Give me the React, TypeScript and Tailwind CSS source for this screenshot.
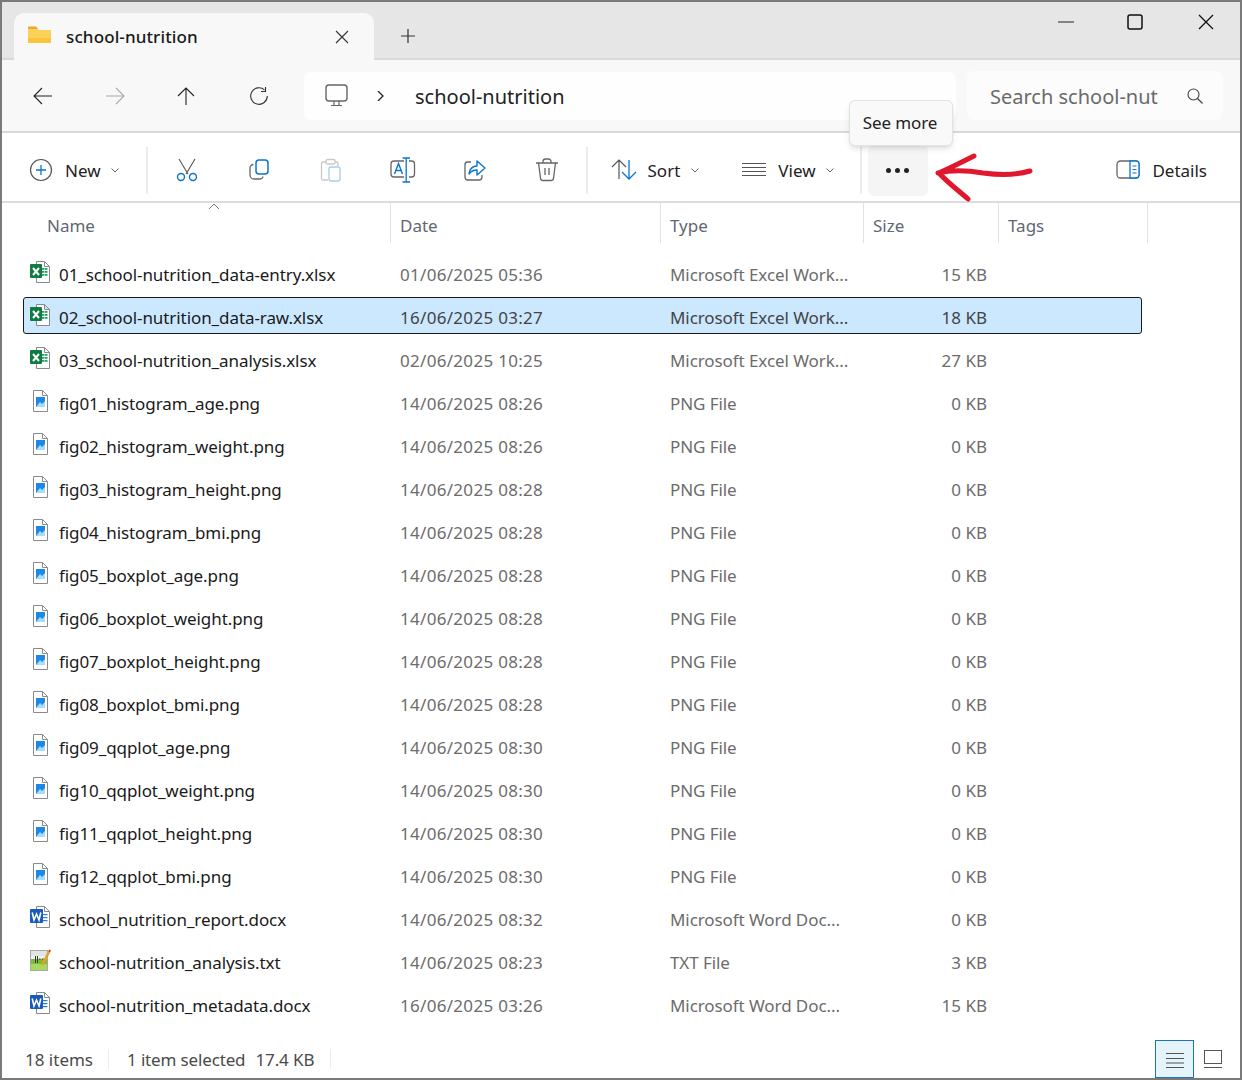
import type { ReactNode } from "react";

type Kind = "xlsx" | "png" | "docx" | "txt";

interface FileRow {
  name: string;
  date: string;
  type: string;
  size: string;
  kind: Kind;
  selected?: boolean;
}

const files: FileRow[] = [
  { name: "01_school-nutrition_data-entry.xlsx", date: "01/06/2025 05:36", type: "Microsoft Excel Work...", size: "15 KB", kind: "xlsx" },
  { name: "02_school-nutrition_data-raw.xlsx", date: "16/06/2025 03:27", type: "Microsoft Excel Work...", size: "18 KB", kind: "xlsx", selected: true },
  { name: "03_school-nutrition_analysis.xlsx", date: "02/06/2025 10:25", type: "Microsoft Excel Work...", size: "27 KB", kind: "xlsx" },
  { name: "fig01_histogram_age.png", date: "14/06/2025 08:26", type: "PNG File", size: "0 KB", kind: "png" },
  { name: "fig02_histogram_weight.png", date: "14/06/2025 08:26", type: "PNG File", size: "0 KB", kind: "png" },
  { name: "fig03_histogram_height.png", date: "14/06/2025 08:28", type: "PNG File", size: "0 KB", kind: "png" },
  { name: "fig04_histogram_bmi.png", date: "14/06/2025 08:28", type: "PNG File", size: "0 KB", kind: "png" },
  { name: "fig05_boxplot_age.png", date: "14/06/2025 08:28", type: "PNG File", size: "0 KB", kind: "png" },
  { name: "fig06_boxplot_weight.png", date: "14/06/2025 08:28", type: "PNG File", size: "0 KB", kind: "png" },
  { name: "fig07_boxplot_height.png", date: "14/06/2025 08:28", type: "PNG File", size: "0 KB", kind: "png" },
  { name: "fig08_boxplot_bmi.png", date: "14/06/2025 08:28", type: "PNG File", size: "0 KB", kind: "png" },
  { name: "fig09_qqplot_age.png", date: "14/06/2025 08:30", type: "PNG File", size: "0 KB", kind: "png" },
  { name: "fig10_qqplot_weight.png", date: "14/06/2025 08:30", type: "PNG File", size: "0 KB", kind: "png" },
  { name: "fig11_qqplot_height.png", date: "14/06/2025 08:30", type: "PNG File", size: "0 KB", kind: "png" },
  { name: "fig12_qqplot_bmi.png", date: "14/06/2025 08:30", type: "PNG File", size: "0 KB", kind: "png" },
  { name: "school_nutrition_report.docx", date: "14/06/2025 08:32", type: "Microsoft Word Doc...", size: "0 KB", kind: "docx" },
  { name: "school-nutrition_analysis.txt", date: "14/06/2025 08:23", type: "TXT File", size: "3 KB", kind: "txt" },
  { name: "school-nutrition_metadata.docx", date: "16/06/2025 03:26", type: "Microsoft Word Doc...", size: "15 KB", kind: "docx" },
];

const Ico = ({ size = 24, className, children }: { size?: number; className?: string; children: ReactNode }) => (
  <svg width={size} height={size} viewBox={`0 0 ${size} ${size}`} fill="none" className={className}>
    {children}
  </svg>
);

const Chevron = () => (
  <Ico size={10} className="shrink-0">
    <path d="M1.5 3.5 5 7l3.5-3.5" stroke="#666" strokeWidth="1" />
  </Ico>
);

const FileIcon = ({ kind }: { kind: Kind }) => {
  if (kind === "xlsx") {
    return (
      <Ico>
        <path d="M8.5 1.5h8l5 5v16h-13z M16.5 1.5v5h5" fill="#fff" stroke="#8a8a8a" />
        <rect x="14" y="8" width="2.5" height="1.8" fill="#21a366" />
        <rect x="17" y="8" width="2.5" height="1.8" fill="#21a366" />
        <rect x="14" y="11" width="2.5" height="1.8" fill="#21a366" />
        <rect x="17" y="11" width="2.5" height="1.8" fill="#21a366" />
        <rect x="14" y="14" width="2.5" height="1.8" fill="#21a366" />
        <rect x="17" y="14" width="2.5" height="1.8" fill="#21a366" />
        <rect x="2" y="4" width="12" height="14" rx="1" fill="#107c41" />
        <path d="m5 8 6 7m0-7-6 7" stroke="#fff" strokeWidth="2" />
      </Ico>
    );
  }
  if (kind === "docx") {
    return (
      <Ico>
        <path d="M8.5 1.5h8l5 5v16h-13z M16.5 1.5v5h5" fill="#fff" stroke="#8a8a8a" />
        <rect x="15" y="9" width="4.5" height="1.2" fill="#2b7cd3" />
        <rect x="15" y="12" width="4.5" height="1.2" fill="#2b7cd3" />
        <rect x="15" y="15" width="4.5" height="1.2" fill="#2b7cd3" />
        <rect x="2" y="4" width="13" height="14" rx="1" fill="#185abd" />
        <path d="m4.2 7.500 1.800 7.500 2.500-6 2.500 6 1.800-7.500" stroke="#fff" strokeWidth="1.600" />
      </Ico>
    );
  }
  if (kind === "txt") {
    return (
      <Ico>
        <rect x="2.5" y="2.5" width="17" height="20" fill="#f1f1f1" stroke="#a8a8a8" />
        <path d="M3 3h16v5H3z" fill="#dfe6e2" />
        <path d="M3 11h16v11H3z" fill="#7dbb3c" />
        <path d="M3 16h16v6H3z" fill="#a8d85c" />
        <path d="M7.5 8v7M9.5 8v7" stroke="#333" />
        <path d="M11 11h1.5M14 11h1.5" stroke="#333" />
        <path d="m14 17 7-13" stroke="#e8a21c" strokeWidth="2.6" />
        <path d="m21 4 1-2" stroke="#c0392b" strokeWidth="2" />
      </Ico>
    );
  }
  return (
    <Ico>
      <path d="M5.5 1.500h9l5 5v16h-14z M14.500 1.500v5h5" fill="#fff" stroke="#8a8a8a" />
      <rect x="8" y="8" width="9" height="10" fill="#1e88e5" />
      <path d="m8 18 4-5 2 2 3-3v6z" fill="#a7dcfb" />
    </Ico>
  );
};

const Row = ({ f }: { f: FileRow }) => {
  const muted = f.selected ? "text-[#444]" : "text-[#6c6c6c]";
  return (
    <div
      className={`grid grid-cols-[367px_270px_203px_123px] h-[37px] w-[1119px] ml-[21px] items-center rounded-[3px] border ${
        f.selected ? "bg-[#cce8ff] border-[#1a1a1a]" : "border-transparent"
      }`}
    >
      <div className="flex items-center pl-[4px] gap-[7px] pt-[3px] text-[#1a1a1a] tracking-[-0.08px]">
        <span className="-mt-[5px] flex"><FileIcon kind={f.kind} /></span>
        <span>{f.name}</span>
      </div>
      <div className={`pl-[9px] pt-[3px] tracking-[0.3px] ${muted}`}>{f.date}</div>
      <div className={`pl-[9px] pt-[3px] tracking-[-0.08px] ${muted}`}>{f.type}</div>
      <div className={`text-right pt-[3px] ${muted}`}>{f.size}</div>
    </div>
  );
};

const ToolIcon = ({ children }: { children: ReactNode }) => (
  <div className="w-[72px] h-[51px] flex items-center justify-center">{children}</div>
);

const Divider = () => <div className="w-[2px] h-[47px] bg-[#ececec]" />;

const HeaderCell = ({ label, width }: { label: string; width: string }) => (
  <div className={`${width} h-[40px] border-r border-[#e3e3e3] pl-[9px] pt-[4px] flex items-center text-[#5f6773]`}>
    {label}
  </div>
);

export default function App() {
  return (
    <div className="relative w-[1242px] h-[1080px] border-2 border-[#7a7a7a] bg-white flex flex-col overflow-hidden font-['Noto_Sans','Open_Sans',sans-serif] text-[17px] leading-none">
      {/* tab strip */}
      <div className="h-[58px] bg-[#e6e6e6] border-b-2 border-[#d8d8d8] flex items-end pl-[12px] shrink-0">
        <div className="w-[360px] h-[47px] -mb-[2px] bg-[#f8f8f8] rounded-t-[10px] flex items-center pl-[14px]">
          <Ico className="-mt-[2px]">
            <path d="M0 3.5a1 1 0 0 1 1-1h7l2.5 3H0z" fill="#f3a80f" />
            <path d="M0 6h23v13H0z" fill="#fcd15a" />
            <path d="M0 14h23v5H0z" fill="#f9c53a" />
          </Ico>
          <span className="ml-[14px] font-medium text-[#1a1a1a] tracking-[0.12px]">school-nutrition</span>
          <Ico size={14} className="ml-auto mr-[25px]">
            <path d="m1 1 12 12M13 1 1 13" stroke="#333" strokeWidth="1.1" />
          </Ico>
        </div>
        <div className="ml-[26px] mb-[14px]">
          <Ico size={16}>
            <path d="M8 1v14M1 8h14" stroke="#333" strokeWidth="1.2" />
          </Ico>
        </div>
        <div className="ml-auto flex self-start items-center h-[40px] pr-[26px]">
          <Ico size={16}><path d="M0 8h16" stroke="#222" strokeWidth="1" /></Ico>
          <Ico size={16} className="ml-[53px]"><rect x="1" y="1" width="14" height="14" rx="2" stroke="#111" strokeWidth="1.5" /></Ico>
          <Ico size={16} className="ml-[55px]"><path d="m1 1 14 14M15 1 1 15" stroke="#111" strokeWidth="1.3" /></Ico>
        </div>
      </div>

      {/* address row */}
      <div className="h-[73px] bg-[#f8f8f8] border-b-2 border-[#d8d8d8] flex items-center pl-[31px] shrink-0">
        <Ico size={20}><path d="M1 10h18M9 2l-8 8 8 8" stroke="#222" strokeWidth="1.1" /></Ico>
        <Ico size={20} className="ml-[52px]"><path d="M1 10h18M11 2l8 8-8 8" stroke="#aaa" strokeWidth="1.1" /></Ico>
        <Ico size={20} className="ml-[51px]"><path d="M10 19V2M2 10l8-8 8 8" stroke="#222" strokeWidth="1.1" /></Ico>
        <Ico size={20} className="ml-[53px]">
          <path d="M15.5 3.8A8.3 8.3 0 1 0 18.3 10" stroke="#333" strokeWidth="1.1" />
          <path d="M16.5 1v4.5H12" stroke="#333" strokeWidth="1.1" />
        </Ico>
        <div className="ml-[35px] w-[652px] h-[48px] bg-[#fefefe] rounded-[7px] flex items-center pl-[21px]">
          <Ico size={24}>
            <rect x="1" y="1" width="21" height="16" rx="3" stroke="#666" strokeWidth="1.4" />
            <path d="M9 17v4M14 17v4M6 21.5h11" stroke="#666" strokeWidth="1.2" />
          </Ico>
          <Ico size={10} className="ml-[27px]"><path d="m2 0 5 5-5 5" stroke="#222" strokeWidth="1.3" /></Ico>
          <span className="ml-[29px] pt-[2px] text-[20px] text-[#222]">school-nutrition</span>
        </div>
        <div className="ml-[11px] w-[256px] h-[49px] bg-[#fcfcfc] rounded-[7px] flex items-center pl-[23px] pr-[20px] text-[20px] text-[#6a6a6a]">
          <span className="pt-[2px]">Search school-nut</span>
          <Ico size={16} className="ml-auto">
            <circle cx="6.5" cy="6.5" r="5.5" stroke="#444" strokeWidth="1.1" />
            <path d="m10.5 10.5 5 5" stroke="#444" strokeWidth="1.2" />
          </Ico>
        </div>
      </div>

      {/* toolbar */}
      <div className="h-[70px] border-b-2 border-[#dcdcdc] flex items-center pl-[27px] pt-[6px] shrink-0 text-[#222]">
        <Ico>
          <circle cx="12" cy="12" r="10.5" stroke="#555" strokeWidth="1.2" />
          <path d="M12 7v10M7 12h10" stroke="#0a74d0" strokeWidth="1.3" />
        </Ico>
        <span className="ml-[12px]">New</span>
        <span className="ml-[9px]"><Chevron /></span>
        <span className="ml-[26px]"><Divider /></span>
        <span className="ml-[3px]" />
        <ToolIcon>
          <Ico>
            <path d="m4 1 9 15M20 1l-9 15" stroke="#555" strokeWidth="1.1" />
            <circle cx="6" cy="19" r="3.5" stroke="#0a74d0" strokeWidth="1.4" />
            <circle cx="18" cy="19" r="3.5" stroke="#0a74d0" strokeWidth="1.4" />
          </Ico>
        </ToolIcon>
        <ToolIcon>
          <Ico>
            <rect x="9" y="2" width="12" height="14" rx="3" stroke="#0a74d0" strokeWidth="1.5" />
            <path d="M6.5 6.5A3.5 3.5 0 0 0 3 10v7a4 4 0 0 0 4 4h6a3 3 0 0 0 3-2.5" stroke="#666" strokeWidth="1.3" />
          </Ico>
        </ToolIcon>
        <ToolIcon>
          <Ico>
            <path d="M7 4H4a1.5 1.5 0 0 0-1.5 1.5v15A1.5 1.5 0 0 0 4 22h5" stroke="#c8c8c8" strokeWidth="1.3" />
            <path d="M16 4h1.5A1.5 1.5 0 0 1 19 5.5V8" stroke="#c8c8c8" strokeWidth="1.3" />
            <rect x="7" y="1.5" width="9" height="4.5" rx="1.5" stroke="#c8c8c8" strokeWidth="1.3" />
            <rect x="10" y="9" width="11" height="14" rx="2" stroke="#a6cdf0" strokeWidth="1.3" />
          </Ico>
        </ToolIcon>
        <ToolIcon>
          <Ico size={26}>
            <path d="M14 4H4a3 3 0 0 0-3 3v10a3 3 0 0 0 3 3h10M19 4h2.500a3 3 0 0 1 3 3v10a3 3 0 0 1-3 3H19" stroke="#666" strokeWidth="1.3" />
            <path d="M12.500 1H20M12.500 25H20M16.200 1v24" stroke="#0a74d0" strokeWidth="1.3" />
            <path d="m4.500 17 4-10.500 4 10.500M5.800 13.500h5.400" stroke="#0a74d0" strokeWidth="1.4" />
          </Ico>
        </ToolIcon>
        <ToolIcon>
          <Ico>
            <path d="M8 4H4.5A2.5 2.5 0 0 0 2 6.5V19a3 3 0 0 0 3 3h11a3 3 0 0 0 3-3v-2" stroke="#666" strokeWidth="1.3" />
            <path d="M6 16c0-5 4-8 8-8V3l8 7-8 7v-5c-3 0-6 1-8 4z" stroke="#0a74d0" strokeWidth="1.4" strokeLinejoin="round" />
          </Ico>
        </ToolIcon>
        <ToolIcon>
          <Ico>
            <path d="M1 5h22M8 5V3.5A2.5 2.5 0 0 1 10.5 1h3A2.5 2.5 0 0 1 16 3.5V5" stroke="#666" strokeWidth="1.3" />
            <path d="M3.5 5 5.5 20a2.5 2.5 0 0 0 2.5 2.5h8a2.5 2.5 0 0 0 2.5-2.5L20.500 5" stroke="#666" strokeWidth="1.3" />
            <path d="M10 10v7M14 10v7" stroke="#666" strokeWidth="1.3" />
          </Ico>
        </ToolIcon>
        <span className="ml-[3px]"><Divider /></span>
        <Ico size={26} className="ml-[23px]">
          <path d="M8 22V3M1 10l7-7 7 7" stroke="#555" strokeWidth="1.2" />
          <path d="M18 3v19M11 15l7 7 7-7" stroke="#0a74d0" strokeWidth="1.3" />
        </Ico>
        <span className="ml-[11px]">Sort</span>
        <span className="ml-[10px]"><Chevron /></span>
        <Ico size={26} className="ml-[41px]">
          <path d="M1 6.500h24M1 10.500h24M1 14.500h24M1 18.500h24" stroke="#555" strokeWidth="1.1" />
        </Ico>
        <span className="ml-[11px]">View</span>
        <span className="ml-[9px]"><Chevron /></span>
        <span className="ml-[25px]"><Divider /></span>
        <div className="ml-[6px] w-[60px] h-[51px] rounded-[6px] bg-[#f5f5f5] flex items-center justify-center gap-[4px]">
          <span className="w-[5px] h-[5px] rounded-full bg-[#222]" />
          <span className="w-[5px] h-[5px] rounded-full bg-[#222]" />
          <span className="w-[5px] h-[5px] rounded-full bg-[#222]" />
        </div>
        <Ico size={24} className="ml-auto">
          <rect x="1" y="3" width="22" height="17" rx="3.500" stroke="#666" strokeWidth="1.3" />
          <path d="M14 3h6a3 3 0 0 1 3 3v11a3 3 0 0 1-3 3h-6z" fill="#fff" stroke="#0a74d0" strokeWidth="1.3" />
          <path d="M16.500 8h4M16.500 11.500h4M16.500 15h4" stroke="#0a74d0" strokeWidth="1.2" />
        </Ico>
        <span className="ml-[12px] mr-[33px]">Details</span>
      </div>

      {/* column headers */}
      <div className="relative flex shrink-0 pl-[23px]">
        <div className="absolute left-[206px] top-0">
          <Ico size={12}><path d="m1 6 5-5 5 5" stroke="#777" strokeWidth="1" /></Ico>
        </div>
        <div className="w-[366px] h-[40px] border-r border-[#e3e3e3] pl-[22px] pt-[4px] flex items-center text-[#5f6773]">Name</div>
        <HeaderCell label="Date" width="w-[270px]" />
        <HeaderCell label="Type" width="w-[203px]" />
        <HeaderCell label="Size" width="w-[135px]" />
        <HeaderCell label="Tags" width="w-[149px]" />
      </div>

      {/* files */}
      <div className="flex flex-col gap-[6px] mt-[11px]">
        {files.map((f) => (
          <Row key={f.name} f={f} />
        ))}
      </div>

      {/* status bar */}
      <div className="mt-auto h-[38px] flex items-center pl-[23px] text-[#4a4a4a] shrink-0">
        <span>18 items</span>
        <div className="ml-[15px] w-px h-[20px] bg-[#ececec]" />
        <span className="ml-[18px] tracking-[-0.15px]">1 item selected</span>
        <span className="ml-[10px] tracking-[-0.1px]">17.4 KB</span>
        <div className="ml-[16px] w-px h-[20px] bg-[#ececec]" />
        <div className="ml-auto w-[39px] h-[38px] bg-[#e5f3fb] border border-[#1a73c4] flex items-center justify-center">
          <Ico size={18}><path d="M0 3.500h18M0 8.500h18M0 13h18M0 17.500h18" stroke="#555" strokeWidth="1" /></Ico>
        </div>
        <Ico size={18} className="ml-[10px] mr-[18px]">
          <rect x=".5" y=".5" width="17" height="13" stroke="#555" />
          <path d="M0 17.500h18" stroke="#555" />
        </Ico>
      </div>

      {/* tooltip */}
      <div className="absolute left-[847px] top-[98px] w-[104px] h-[46px] pb-[2px] pr-[2px] bg-[#f9f9f9] border border-[#e2e2e2] rounded-[6px] shadow-md flex items-center justify-center text-[#222] tracking-[-0.1px]">
        See more
      </div>

      {/* hand drawn arrow */}
      <svg className="absolute left-[932px] top-[150px]" width="105" height="52" viewBox="0 0 105 52" fill="none">
        <path
          d="M4 21c12-3 28-3 45 0 15 2 34 2 47-2M40 4C28 10 16 16 5 21c8 9 20 18 29 26"
          stroke="#e0182d"
          strokeWidth="5"
          strokeLinecap="round"
          strokeLinejoin="round"
        />
      </svg>
    </div>
  );
}
